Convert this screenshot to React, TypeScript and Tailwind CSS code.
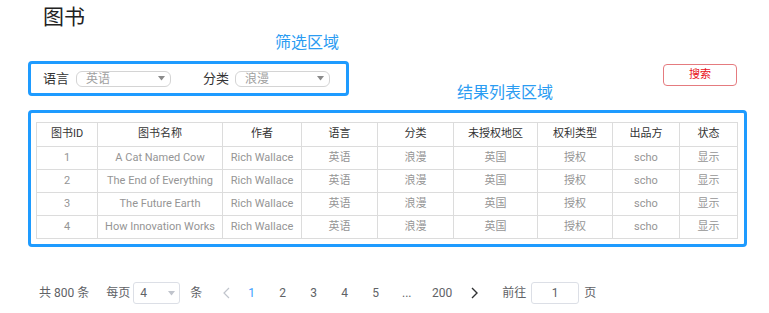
import React from 'react';

const font = { fontFamily: 'Roboto, "Noto Sans CJK SC", sans-serif' };

const cols = [
  { title: '图书ID', w: 'w-[61px]' },
  { title: '图书名称', w: 'w-[125px]' },
  { title: '作者', w: 'w-[79px]' },
  { title: '语言', w: 'w-[76px]' },
  { title: '分类', w: 'w-[76px]' },
  { title: '未授权地区', w: 'w-[84px]' },
  { title: '权利类型', w: 'w-[75px]' },
  { title: '出品方', w: 'w-[67px]' },
  { title: '状态', w: 'w-[58px]' },
];

const books = [
  ['1', 'A Cat Named Cow'],
  ['2', 'The End of Everything'],
  ['3', 'The Future Earth'],
  ['4', 'How Innovation Works'],
];

const Caret: React.FC<{ color: string }> = ({ color }) => (
  <svg width="7" height="5" viewBox="0 0 7 5">
    <path d="M0 0 L7 0 L3.5 4.5 Z" fill={color} />
  </svg>
);

const FilterSelect: React.FC<{ value: string }> = ({ value }) => (
  <div className="flex items-center justify-between w-[95px] h-[16px] border border-[#d4d4d4] rounded-[6px] pl-[9px] pr-[5px]">
    <span className="text-[12px] leading-none text-[#a0a0a0]">{value}</span>
    <Caret color="#8a8a8a" />
  </div>
);

const App: React.FC = () => {
  return (
    <div className="w-[769px] h-[313px] bg-white text-[#333]" style={font}>
      <h1 className="pl-[43px] pt-[3px] text-[21px] leading-[28px] text-[#222]">图书</h1>
      <div className="pl-[275px] mt-[2px] text-[16px] leading-[20px] text-[#2b9cf2]">筛选区域</div>

      <div className="flex items-start mt-[8px]">
        <div className="ml-[28px] w-[321px] h-[35px] border-[3px] border-[#1e9bff] rounded-[4px] flex items-center pl-[12px]">
          <span className="text-[13px] mr-[7px]">语言</span>
          <FilterSelect value="英语" />
          <span className="text-[13px] ml-[32px] mr-[6px]">分类</span>
          <FilterSelect value="浪漫" />
        </div>
        <div className="flex-1 flex flex-col pt-[3px]">
          <button className="self-end mr-[32px] w-[74px] h-[22px] border border-[#e57b7f] rounded-[4px] text-[11px] text-[#e8101a]">
            搜索
          </button>
          <div className="ml-[108px] mt-[-3px] text-[16px] leading-[20px] text-[#2b9cf2]">结果列表区域</div>
        </div>
      </div>

      <div className="ml-[28px] mt-[7px] w-[719px] h-[137px] border-[3px] border-[#1e9bff] rounded-[4px] pl-[5px] pt-[9px]">
        <table className="border-collapse border border-[#d9d9d9] text-[11px] table-fixed w-[701px]">
          <thead>
            <tr className="h-[24px]">
              {cols.map((c) => (
                <th key={c.title} className={`${c.w} border border-[#dcdcdc] font-normal text-[#333] text-center p-0`}>
                  {c.title}
                </th>
              ))}
            </tr>
          </thead>
          <tbody>
            {books.map(([id, name]) => (
              <tr key={id} className="h-[23px] text-[#959595]">
                {[id, name, 'Rich Wallace', '英语', '浪漫', '英国', '授权', 'scho', '显示'].map((v, i) => (
                  <td key={i} className="border border-[#dcdcdc] text-center p-0 whitespace-nowrap">
                    {v}
                  </td>
                ))}
              </tr>
            ))}
          </tbody>
        </table>
      </div>

      <div className="flex items-center mt-[35px] pl-[39px] h-[22px] text-[12px] text-[#606266]">
        <span>共 800 条</span>
        <span className="ml-[17px]">每页</span>
        <div className="ml-[3px] w-[47px] h-[22px] border border-[#dcdfe6] rounded-[3px] flex items-center justify-between pl-[6px] pr-[4px]">
          <span className="text-[#606266]">4</span>
          <Caret color="#c0c4cc" />
        </div>
        <span className="ml-[10px]">条</span>
        <div className="ml-[14px] w-[20px] flex justify-center">
          <svg width="8" height="12" viewBox="0 0 8 12">
            <polyline points="7,1 2,6 7,11" fill="none" stroke="#c0c4cc" strokeWidth="1.2" />
          </svg>
        </div>
        {['1', '2', '3', '4', '5', '...'].map((p) => (
          <span key={p} className={`w-[31px] text-center ${p === '1' ? 'text-[#409eff]' : ''}`}>
            {p}
          </span>
        ))}
        <span className="w-[40px] text-center">200</span>
        <div className="w-[26px] flex justify-center">
          <svg width="8" height="12" viewBox="0 0 8 12">
            <polyline points="1,1 6,6 1,11" fill="none" stroke="#303133" strokeWidth="1.4" />
          </svg>
        </div>
        <span className="ml-[14px]">前往</span>
        <div className="ml-[5px] w-[48px] h-[22px] border border-[#dcdfe6] rounded-[3px] flex items-center justify-center">
          1
        </div>
        <span className="ml-[5px]">页</span>
      </div>
    </div>
  );
};

export default App;
